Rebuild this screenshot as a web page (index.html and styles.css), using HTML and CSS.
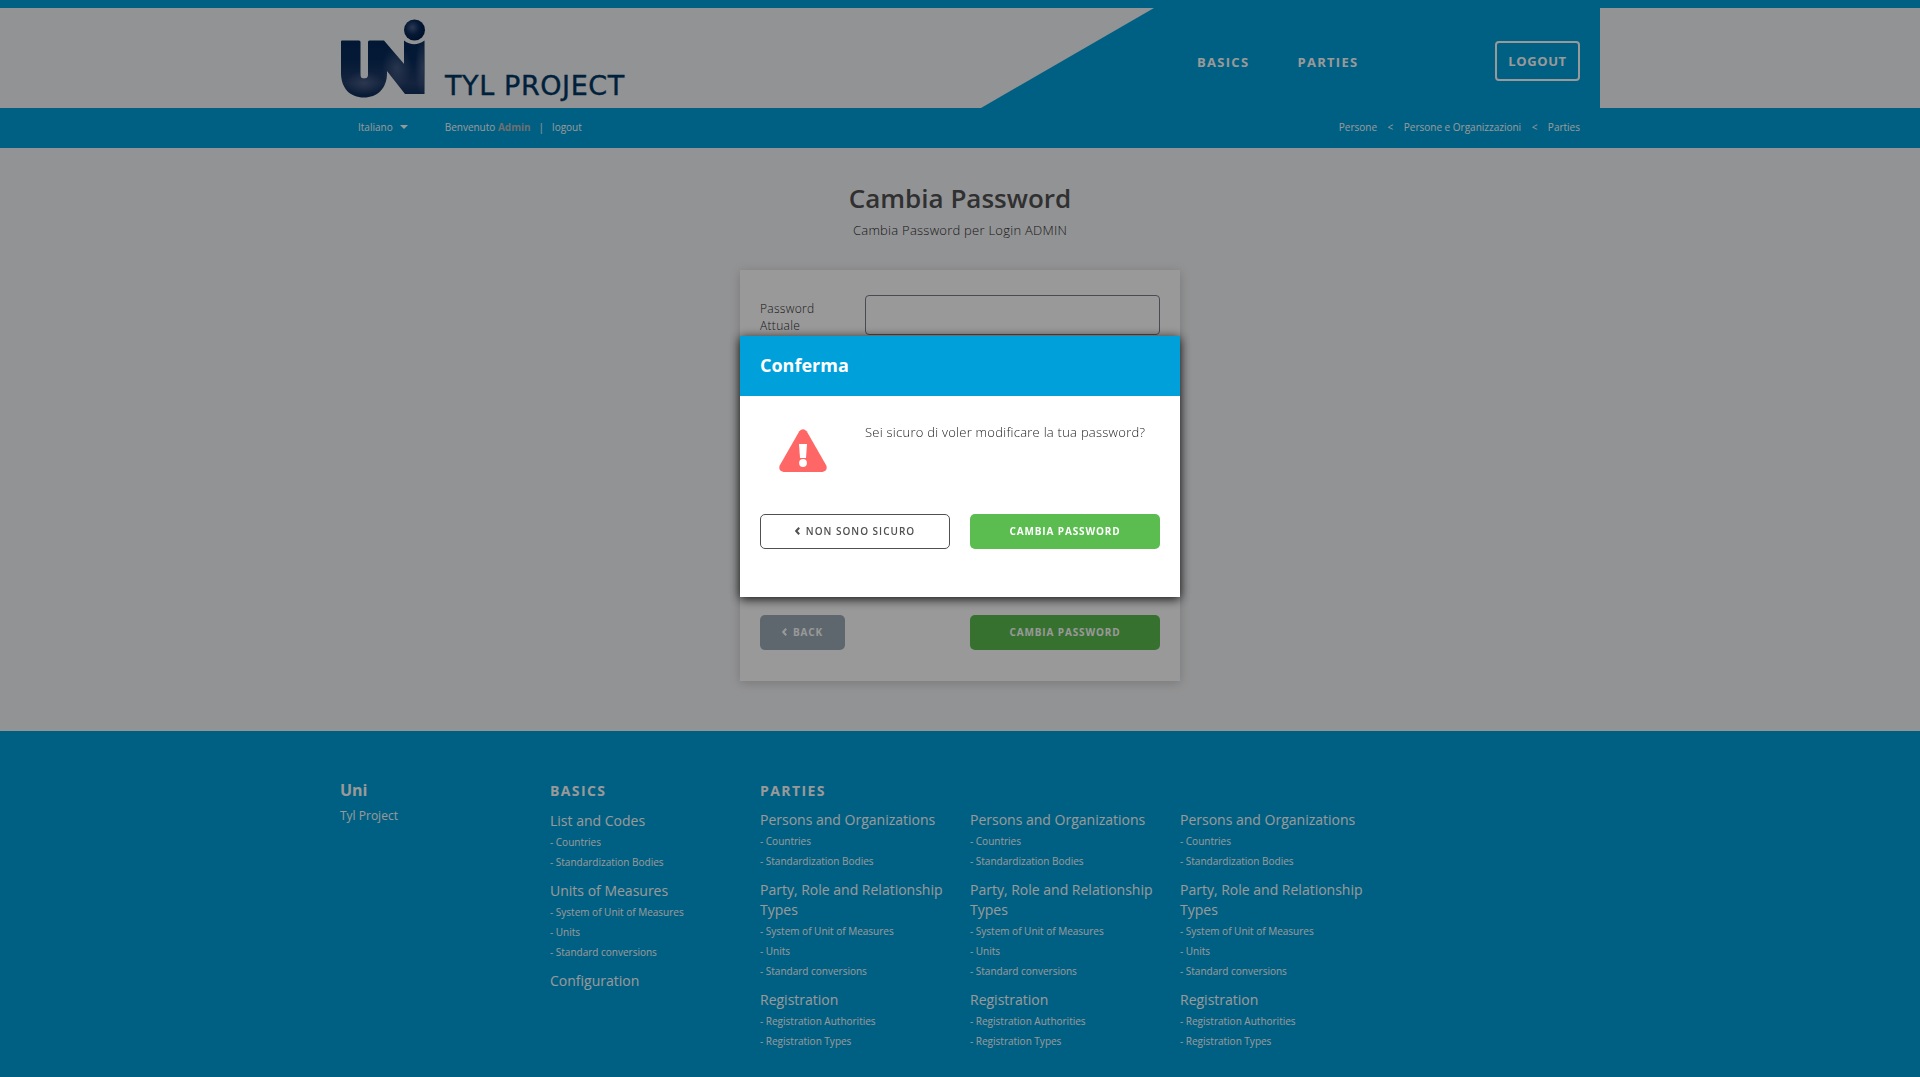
FILE: index.html
```html
<!DOCTYPE html>
<html lang="it">
<head>
<meta charset="utf-8">
<title>Cambia Password</title>
<link rel="stylesheet" href="styles.css">
</head>
<body>
<header class="header">
  <div class="container header-row">
    <div class="brand">
      <svg class="logo" width="86" height="80" viewBox="0 0 86 80">
        <defs>
          <linearGradient id="body" x1="0" y1="0" x2="0" y2="1">
            <stop offset="0" stop-color="#002552"/><stop offset=".5" stop-color="#062b5a"/><stop offset=".8" stop-color="#233c69"/><stop offset="1" stop-color="#082a56"/>
          </linearGradient>
          <radialGradient id="glow"><stop offset="0" stop-color="#5f6d92" stop-opacity=".65"/><stop offset="1" stop-color="#5f6d92" stop-opacity="0"/></radialGradient>
          <radialGradient id="ball" cx=".4" cy=".38" r=".6"><stop offset="0" stop-color="#4a5f8c"/><stop offset=".55" stop-color="#0b2b5a"/><stop offset="1" stop-color="#001e48"/></radialGradient>
          <clipPath id="shape"><path d="M1 22.500Q1 21.500 2 21.500H19Q20.500 21.500 20.500 23V56Q20.500 59.500 24 59.500Q28 59.500 28 56V23Q28 21.500 29.500 21.500H44L64 45V21.500Q74 29 84.500 21.500V75H65L47 52V54C47 70 37 78.500 24 78.500C10 78.500 1 69 1 54Z"/></clipPath>
        </defs>
        <g clip-path="url(#shape)">
          <rect width="86" height="80" fill="url(#body)"/>
          <ellipse cx="24" cy="64" rx="19" ry="12" fill="url(#glow)"/>
          <ellipse cx="57" cy="49" rx="15" ry="22" fill="url(#glow)"/>
          <ellipse cx="83" cy="48" rx="8" ry="30" fill="url(#glow)"/>
        </g>
        <circle cx="74.500" cy="11" r="10.500" fill="url(#ball)"/>
      </svg>
      <span class="brand-name">TYL PROJECT</span>
    </div>
    <nav class="nav">
      <a class="nav-link">BASICS</a>
      <a class="nav-link">PARTIES</a>
      <a class="logout">LOGOUT</a>
    </nav>
  </div>
</header>
<div class="subbar">
  <div class="container subbar-row">
    <span class="language">Italiano</span><i class="caret"></i>
    <span class="welcome">Benvenuto <b>Admin</b></span><span class="divider">|</span><span>logout</span>
    <div class="crumbs"><span>Persone</span><span>&lt;</span><span>Persone e Organizzazioni</span><span>&lt;</span><span>Parties</span></div>
  </div>
</div>
<main class="main">
  <h1 class="title">Cambia Password</h1>
  <p class="subtitle">Cambia Password per Login ADMIN</p>
  <section class="card">
    <div class="field"><label class="label" for="current">Password Attuale</label><input class="input" id="current" type="password"></div>
    <div class="actions">
      <button class="btn btn-back"><svg class="chevron" width="5" height="8" viewBox="0 0 5 8"><path d="M4.200 .8 1.200 4l3 3.200" fill="none" stroke="currentColor" stroke-width="2"/></svg>BACK</button>
      <button class="btn btn-green">CAMBIA PASSWORD</button>
    </div>
  </section>
</main>
<footer class="footer">
  <div class="container footer-row">
    <div class="about"><h2 class="about-name">Uni</h2><p class="about-text">Tyl Project</p></div>
    <div class="basics">
      <h3 class="foot-title">BASICS</h3>
      <h4>List and Codes</h4><ul><li>- Countries</li><li>- Standardization Bodies</li></ul>
      <h4>Units of Measures</h4><ul><li>- System of Unit of Measures</li><li>- Units</li><li>- Standard conversions</li></ul>
      <h4>Configuration</h4>
    </div>
    <div class="parties">
      <h3 class="foot-title">PARTIES</h3>
      <div class="party-columns">
        <div>
          <h4>Persons and Organizations</h4><ul><li>- Countries</li><li>- Standardization Bodies</li></ul>
          <h4>Party, Role and Relationship Types</h4><ul><li>- System of Unit of Measures</li><li>- Units</li><li>- Standard conversions</li></ul>
          <h4>Registration</h4><ul><li>- Registration Authorities</li><li>- Registration Types</li></ul>
        </div>
        <div>
          <h4>Persons and Organizations</h4><ul><li>- Countries</li><li>- Standardization Bodies</li></ul>
          <h4>Party, Role and Relationship Types</h4><ul><li>- System of Unit of Measures</li><li>- Units</li><li>- Standard conversions</li></ul>
          <h4>Registration</h4><ul><li>- Registration Authorities</li><li>- Registration Types</li></ul>
        </div>
        <div>
          <h4>Persons and Organizations</h4><ul><li>- Countries</li><li>- Standardization Bodies</li></ul>
          <h4>Party, Role and Relationship Types</h4><ul><li>- System of Unit of Measures</li><li>- Units</li><li>- Standard conversions</li></ul>
          <h4>Registration</h4><ul><li>- Registration Authorities</li><li>- Registration Types</li></ul>
        </div>
      </div>
    </div>
  </div>
</footer>
<div class="overlay">
  <div class="modal">
    <h2 class="modal-title">Conferma</h2>
    <div class="modal-body">
      <div class="message">
        <svg class="warning" width="48" height="43" viewBox="0 0 48 43"><path d="M20.300 2.200Q24-1.600 27.700 2.200L47.300 36.500Q49 42 43.500 43H4.500Q-1 42 .7 36.500Z" fill="#f66"/><path d="M20 15h8l-1 14h-6Z" fill="#fff"/><circle cx="24" cy="34" r="3.900" fill="#fff"/></svg>
        <p class="question">Sei sicuro di voler modificare la tua password?</p>
      </div>
      <div class="modal-actions">
        <button class="btn btn-outline"><svg class="chevron" width="5" height="8" viewBox="0 0 5 8"><path d="M4.200 .8 1.200 4l3 3.200" fill="none" stroke="currentColor" stroke-width="2"/></svg>NON SONO SICURO</button>
        <button class="btn btn-green">CAMBIA PASSWORD</button>
      </div>
    </div>
  </div>
</div>
</body>
</html>
```
FILE: styles.css
```css
* { box-sizing: border-box; }
html, body { height: 100%; }
body { margin: 0; overflow: hidden; background: #f4f5f7; color: #505052; font: 10px/20px "Open Sans", sans-serif; }
h1, h2, h3, h4, p, ul { margin: 0; padding: 0; font-weight: 400; list-style: none; }
.container { width: 1280px; margin: 0 auto; padding: 0 20px; }
.header { height: 108px; border-top: 8px solid #00a0db; }
.header-row { display: flex; justify-content: space-between; height: 100px; padding-right: 0; }
.brand { display: flex; align-items: flex-start; padding-top: 11px; }
.brand-name { margin: 51px 0 0 19px; font: 27px/32px "DejaVu Sans", sans-serif; letter-spacing: .6px; color: #003765; -webkit-text-stroke: .4px #003765; white-space: nowrap; }
.nav { display: flex; align-items: flex-start; width: 619px; height: 100px; padding: 33px 20px 0 216px; background: #00a0db; clip-path: polygon(173px 0, 100% 0, 100% 100%, 0 100%); color: #fff; }
.nav-link { margin: 11px 48px 0 0; font-size: 13px; font-weight: 700; letter-spacing: 1.3px; }
.logout { width: 85px; height: 40px; margin-left: auto; border: 2px solid #fff; border-radius: 4px; font-size: 13px; font-weight: 700; letter-spacing: .6px; line-height: 36px; text-align: center; }
.subbar { height: 40px; background: #00a0db; color: #fff; }
.subbar-row { display: flex; align-items: center; height: 37px; padding-left: 38px; }
.caret { margin: 0 37px 0 7px; border: 4px solid transparent; border-top: 4px solid #fff; border-bottom: 0; }
.welcome b { color: #bcb9b9; }
.divider { margin: 0 8px; }
.crumbs { display: flex; gap: 10.500px; margin-left: auto; }
.main { height: 583px; padding-top: 30px; }
.title { font-size: 26px; font-weight: 600; line-height: 40px; text-align: center; }
.subtitle { margin-top: 2px; font-size: 13px; font-weight: 300; letter-spacing: .25px; color: #2c2c2e; text-align: center; }
.card { width: 440px; height: 411px; margin: 30px auto 0; padding: 25px 20px 31px; display: flex; flex-direction: column; justify-content: space-between; background: #fff; box-shadow: 0 2px 10px rgba(0,0,0,.18); }
.field { display: flex; justify-content: space-between; }
.label { width: 80px; padding-top: 5px; font-size: 12px; font-weight: 300; letter-spacing: .3px; line-height: 17px; color: #2c2c2e; }
.input { width: 295px; height: 40px; padding: 0 10px; background: #fff; border: 1px solid #7b7c8b; border-radius: 4px; }
.actions, .modal-actions { display: flex; justify-content: space-between; }
.btn { display: flex; align-items: center; justify-content: center; width: 190px; height: 35px; padding: 0 0 2px; border: 0; border-radius: 5px; font: 700 10px/20px "Open Sans", sans-serif; letter-spacing: .87px; color: #fff; }
.btn-green { background: #5bbd50; }
.btn-back { width: 85px; background: #9eacb8; }
.btn-outline { background: #fff; border: 1px solid #505052; color: #505052; font-weight: 600; letter-spacing: 1px; }
.chevron { margin: 1px 6px 0 0; }
.footer { height: 346px; padding-top: 47px; background: #00a0db; color: #fff; }
.footer-row { display: flex; }
.about, .basics { width: 210px; }
.about-name { font-size: 16px; font-weight: 700; line-height: 24px; }
.about-text { margin-top: 4px; font-size: 12px; }
.foot-title { height: 33px; font-size: 14px; font-weight: 700; letter-spacing: 1.4px; line-height: 25px; }
.parties .foot-title { height: 32px; }
.party-columns { display: grid; grid-template-columns: repeat(3, 190px); gap: 20px; }
.footer h4 { font-size: 14px; line-height: 20px; }
.footer ul { padding-top: 1px; margin-bottom: 9px; }
.overlay { position: fixed; inset: 0; padding-top: 336px; background: rgba(0,0,0,.4); }
.modal { width: 440px; height: 260.5px; margin: 0 auto; background: #fff; box-shadow: 0 2px 10px rgba(0,0,0,.9); }
.modal-title { height: 60px; padding: 0 20px; background: #00a0db; color: #fff; font-size: 18px; font-weight: 700; line-height: 58px; }
.modal-body { padding: 26px 20px 0; }
.message { display: flex; align-items: flex-start; height: 92px; padding-left: 19px; }
.warning { margin: 6.5px 38px 0 0; }
.question { font-size: 13px; font-weight: 300; letter-spacing: .25px; color: #1c1c1e; white-space: nowrap; }
```
